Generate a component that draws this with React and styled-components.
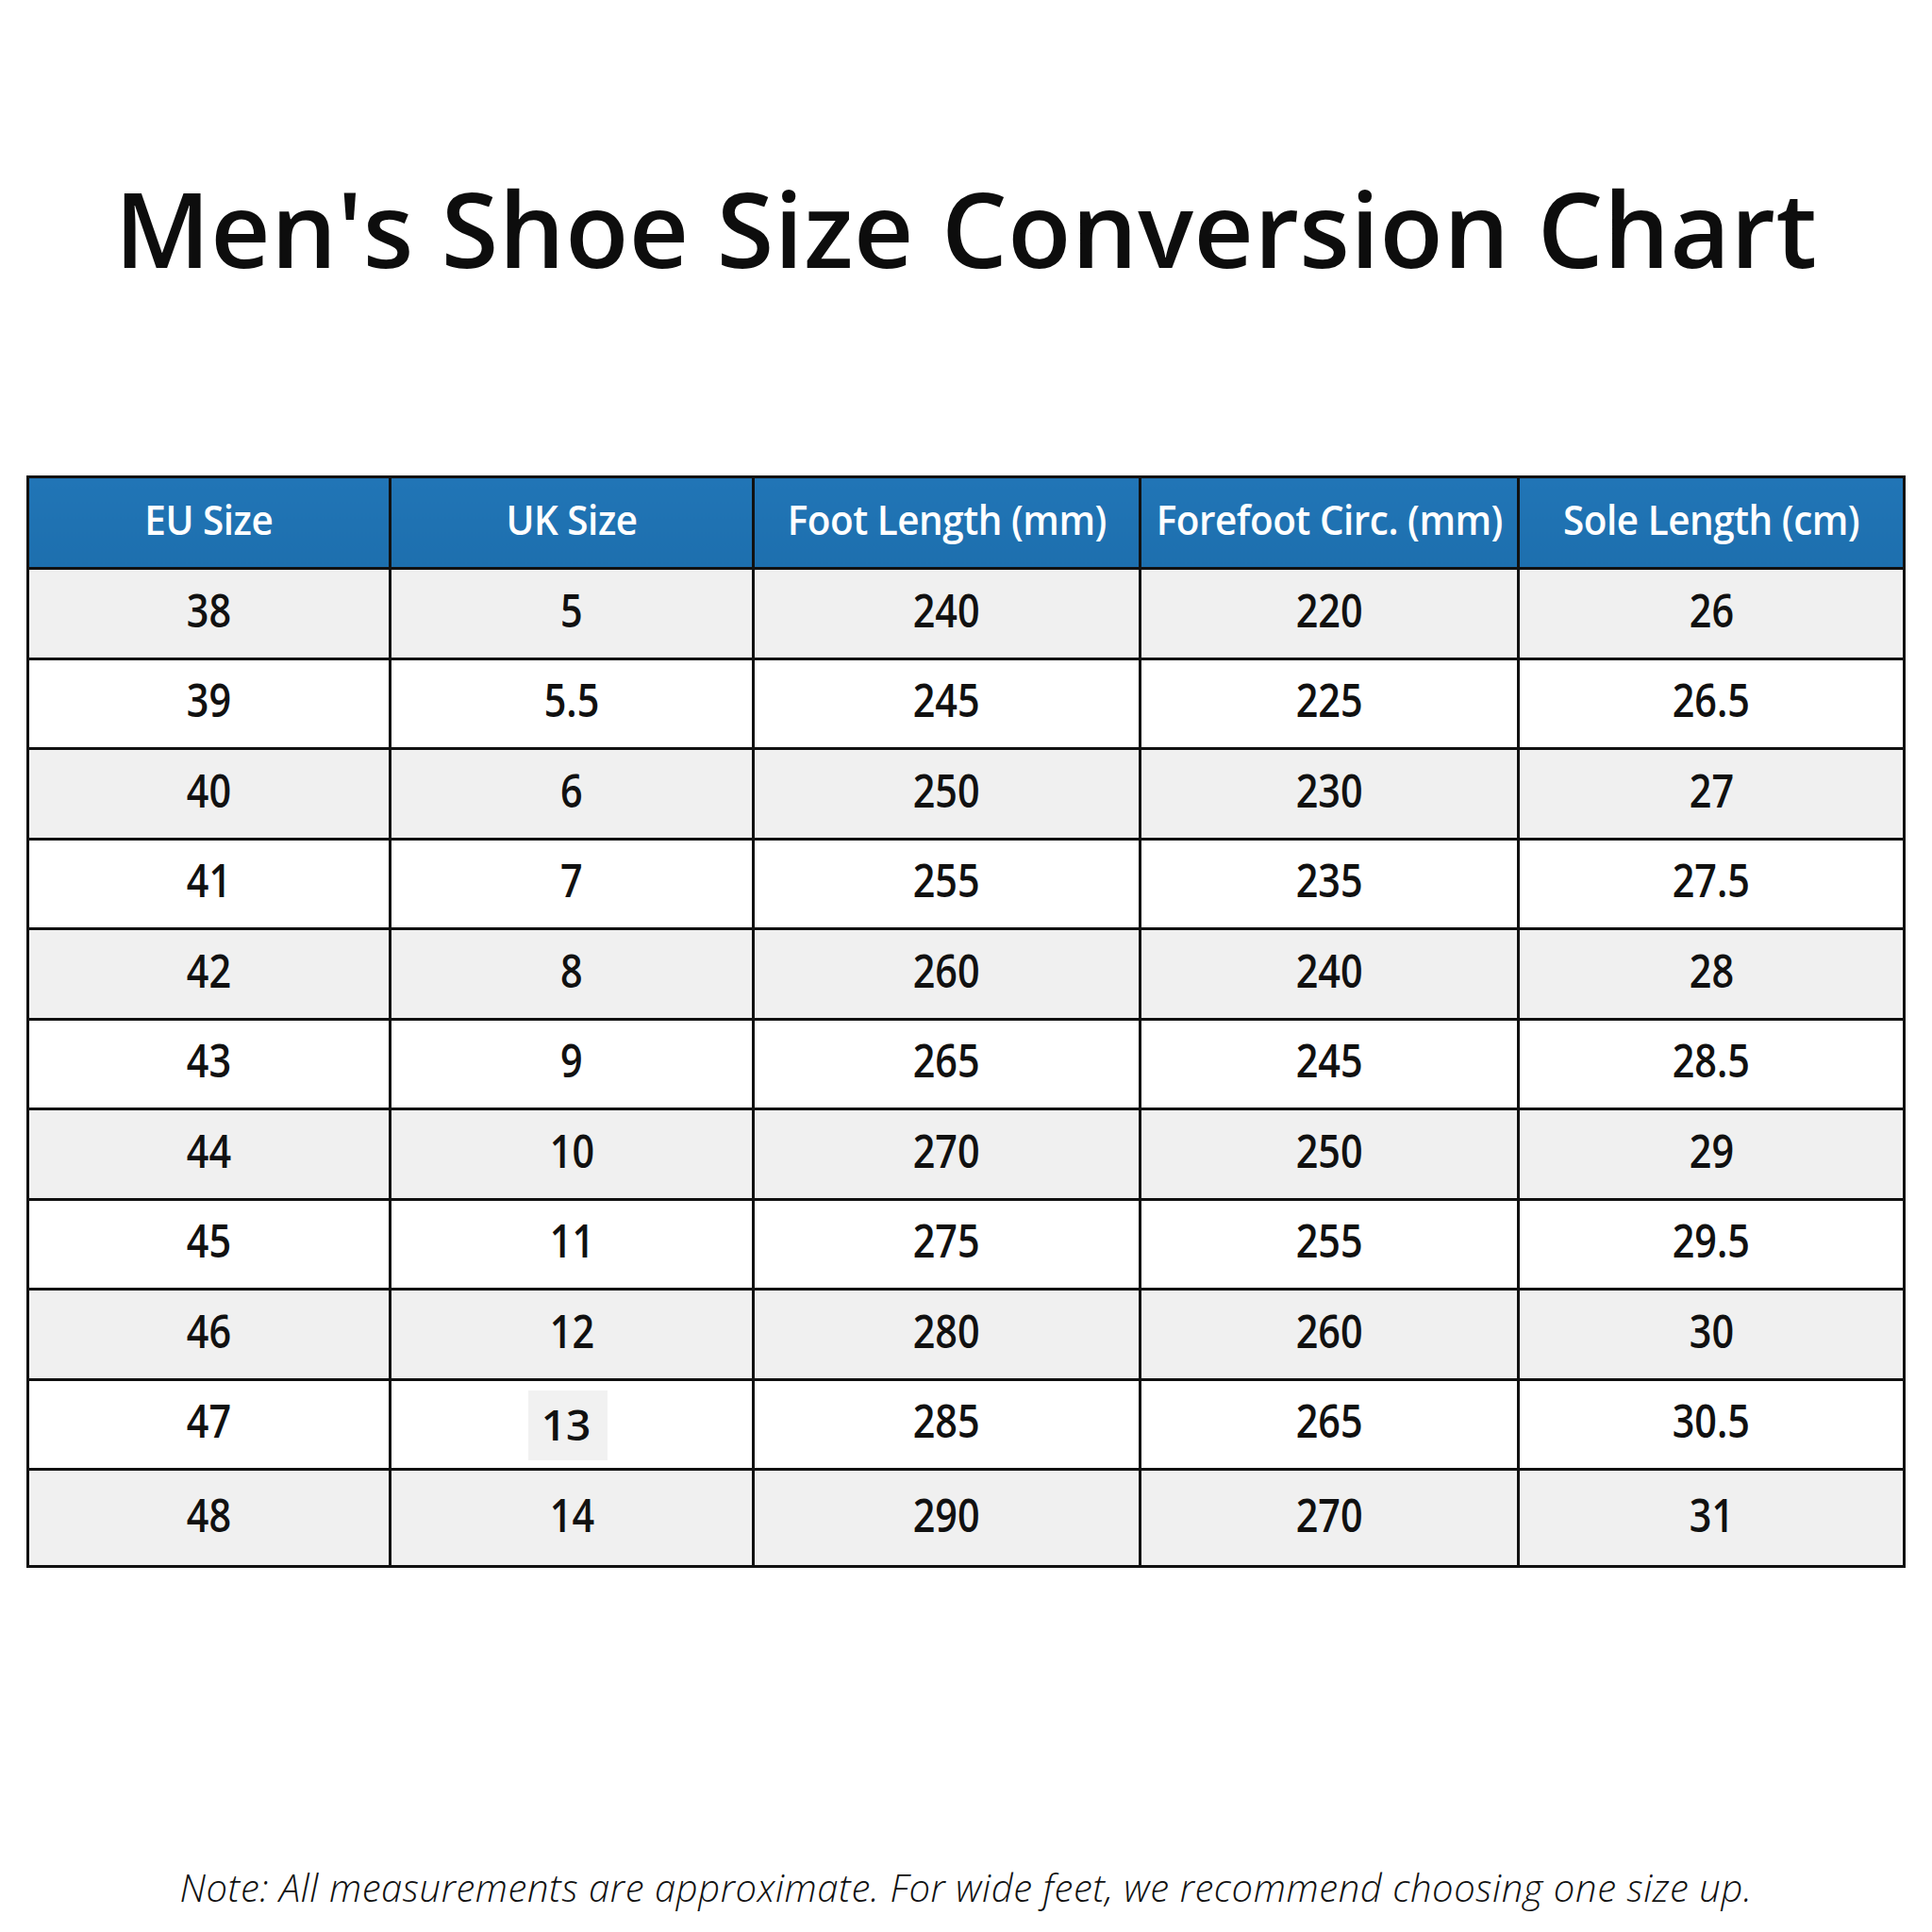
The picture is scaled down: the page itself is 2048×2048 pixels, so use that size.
import React from 'react';
import styled, {createGlobalStyle} from 'styled-components';

const GlobalStyle = createGlobalStyle`
    html, body {
        margin: 0;
        padding: 0;
        background: #ffffff;
    }
    body {
        font-family: "Open Sans", "Noto Sans", "Liberation Sans", sans-serif;
        color: #111111;
    }
`;

const Page = styled.div`
    width: 2048px;
    height: 2048px;
    display: flex;
    flex-direction: column;
    align-items: center;
    background: #ffffff;
`;

const TitleArea = styled.div`
    height: 504px;
    width: 100%;
    display: flex;
    align-items: flex-start;
    justify-content: center;
    box-sizing: border-box;
    padding-top: 166px;
`;

const Title = styled.h1`
    margin: 0;
    font-family: "Open Sans", "Noto Sans", sans-serif;
    font-weight: 600;
    font-size: 110px;
    line-height: 150px;
    letter-spacing: 0.5px;
    color: #0d0d0d;
`;

const Table = styled.table`
    width: 1989px;
    table-layout: fixed;
    border-collapse: collapse;
    border: 3px solid #111111;
`;

const HeadCell = styled.th`
    height: 86px;
    padding: 0 0 8px 0;
    background: linear-gradient(180deg, #2175b6 0%, #1d6fae 100%);
    color: #ffffff;
    font-size: 43px;
    font-weight: 600;
    text-align: center;
    vertical-align: middle;
    border: 3px solid #111111;
    white-space: nowrap;
`;

const HeadLabel = styled.span`
    display: inline-block;
    transform: scaleX(0.94);
    letter-spacing: -0.5px;
`;

const Row = styled.tr`
    background: ${(p) => (p.$shaded ? '#f0f0f0' : '#ffffff')};
    height: ${(p) => (p.$last ? '103px' : '95.5px')};
`;

const Cell = styled.td`
    padding: 0 0 8px 0;
    text-align: center;
    vertical-align: middle;
    border: 3px solid #111111;
    font-size: 48px;
    font-weight: 600;
    color: #111111;
`;

const Num = styled.span`
    display: inline-block;
    transform: ${(p) => (p.$patch ? 'none' : 'scaleX(0.86)')};
    background: ${(p) => (p.$patch ? '#f1f1f1' : 'transparent')};
    padding: ${(p) => (p.$patch ? '4px 18px 8px 14px' : '0')};
    margin: ${(p) => (p.$patch ? '10px 0 0 -8px' : '0')};
    font-size: ${(p) => (p.$patch ? '46px' : '48px')};
`;

const NoteArea = styled.div`
    flex: 1;
    display: flex;
    align-items: flex-end;
    padding-bottom: 20px;
`;

const Note = styled.p`
    margin: 0;
    font-family: "Open Sans", "Noto Sans", sans-serif;
    font-style: italic;
    font-weight: 300;
    font-size: 40px;
    letter-spacing: 0.6px;
    color: #111111;
`;

const columns = [
    {label: 'EU Size', width: 384},
    {label: 'UK Size', width: 385},
    {label: 'Foot Length (mm)', width: 410},
    {label: 'Forefoot Circ. (mm)', width: 401},
    {label: 'Sole Length (cm)', width: 409},
];

const rows = [
    ['38', '5', '240', '220', '26'],
    ['39', '5.5', '245', '225', '26.5'],
    ['40', '6', '250', '230', '27'],
    ['41', '7', '255', '235', '27.5'],
    ['42', '8', '260', '240', '28'],
    ['43', '9', '265', '245', '28.5'],
    ['44', '10', '270', '250', '29'],
    ['45', '11', '275', '255', '29.5'],
    ['46', '12', '280', '260', '30'],
    ['47', '13', '285', '265', '30.5'],
    ['48', '14', '290', '270', '31'],
];

export default function App() {
    return (
        <Page>
            <GlobalStyle />
            <TitleArea>
                <Title>Men&apos;s Shoe Size Conversion Chart</Title>
            </TitleArea>
            <Table>
                <colgroup>
                    {columns.map((c) => <col key={c.label} style={{width: `${c.width}px`}} />)}
                </colgroup>
                <thead>
                    <tr>
                        {columns.map((c) => (
                            <HeadCell key={c.label}>
                                <HeadLabel>{c.label}</HeadLabel>
                            </HeadCell>
                        ))}
                    </tr>
                </thead>
                <tbody>
                    {rows.map((r, i) => (
                        <Row key={r[0]} $shaded={i % 2 === 0} $last={i === rows.length - 1}>
                            {r.map((v, j) => (
                                <Cell key={`${r[0]}_${j}`}>
                                    {/* the 13 in the reference sits on a faint grey patch */}
                                    <Num $patch={r[0] === '47' && j === 1}>{v}</Num>
                                </Cell>
                            ))}
                        </Row>
                    ))}
                </tbody>
            </Table>
            <NoteArea>
                <Note>Note: All measurements are approximate. For wide feet, we recommend choosing one size up.</Note>
            </NoteArea>
        </Page>
    );
}
